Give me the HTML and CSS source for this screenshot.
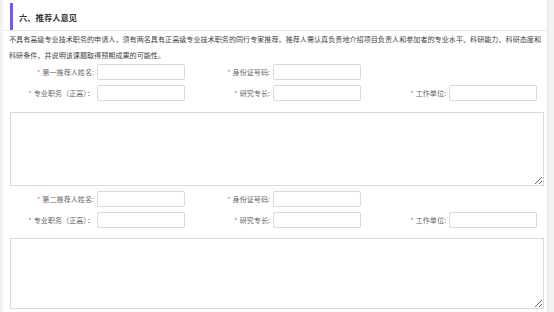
FILE: index.html
```html
<!DOCTYPE html>
<html>
<head>
	<meta charset="utf-8">
	<link rel="stylesheet" href="styles.css">
</head>
<body>
	<div class="page">
		<div class="section-head">
			<div class="section-title">六、推荐人意见</div>
		</div>
		<p class="intro">
			不具有高级专业技术职务的申请人，须有两名具有正高级专业技术职务的同行专家推荐。推荐人需认真负责地介绍项目负责人和参加者的专业水平、科研能力、科研态度和科研条件，并说明该课题取得预期成果的可能性。
		</p>

		<!-- first referee -->
		<div class="referee">
			<div class="form-row">
				<div class="field"><label><span class="req">*</span>第一推荐人姓名:</label><input type="text"></div>
				<div class="field"><label><span class="req">*</span>身份证号码:</label><input type="text"></div>
			</div>
			<div class="form-row">
				<div class="field"><label><span class="req">*</span>专业职务（正高）：</label><input type="text"></div>
				<div class="field"><label><span class="req">*</span>研究专长:</label><input type="text"></div>
				<div class="field"><label><span class="req">*</span>工作单位:</label><input type="text"></div>
			</div>
			<textarea class="opinion first"></textarea>
		</div>

		<!-- second referee -->
		<div class="referee">
			<div class="form-row">
				<div class="field"><label><span class="req">*</span>第二推荐人姓名:</label><input type="text"></div>
				<div class="field"><label><span class="req">*</span>身份证号码:</label><input type="text"></div>
			</div>
			<div class="form-row">
				<div class="field"><label><span class="req">*</span>专业职务（正高）：</label><input type="text"></div>
				<div class="field"><label><span class="req">*</span>研究专长:</label><input type="text"></div>
				<div class="field"><label><span class="req">*</span>工作单位:</label><input type="text"></div>
			</div>
			<textarea class="opinion second"></textarea>
		</div>
	</div>
	<div class="rail"></div>
</body>
</html>
```

FILE: styles.css
```css
html, body {
	margin: 0;
	padding: 0;
	width: 100%;
	height: 100%;
	overflow: hidden;
}
body {
	display: flex;
	background-color: #f2f2f2;
	font-family: "Noto Sans CJK SC", "Noto Sans", sans-serif;
	color: #555;
}
.page {
	width: 544px;
	margin-left: 3px;
	background: #fff;
	box-sizing: border-box;
}
.rail {
	flex: 1;
	background: #f3f3f3;
	border-left: 1px solid #e4e4e4;
}
.section-head {
	height: 31px;
	border-bottom: 1px solid #e8e8e8;
	padding: 3px 0 0 7px;
	box-sizing: border-box;
}
.section-title {
	height: 27px;
	border-left: 3px solid #7658f2;
	padding-left: 6px;
	display: flex;
	align-items: center;
	font-size: 8.3px;
	font-weight: bold;
	color: #333;
}
.intro {
	margin: 0;
	padding: 0 0 0 6px;
	font-size: 7.1px;
	line-height: 16px;
	color: #444;
}
.referee {
	display: flow-root;
	padding-top: 1px;
}
.referee + .referee {
	padding-top: 5px;
}
.form-row {
	display: grid;
	grid-template-columns: repeat(3, 176px);
	padding-left: 8px;
	margin-bottom: 5px;
}
.field {
	display: flex;
	align-items: center;
}
.field label {
	width: 86px;
	padding-right: 3px;
	box-sizing: border-box;
	text-align: right;
	font-size: 7.1px;
	color: #666;
	white-space: nowrap;
}
.req {
	color: #f26d6d;
	margin-right: 2px;
}
.field input {
	width: 88px;
	height: 16px;
	margin: 0;
	padding: 0 4px;
	border: 1px solid #d9d9d9;
	border-radius: 2px;
	box-sizing: border-box;
	font-size: 7px;
}
.opinion {
	display: block;
	width: 534px;
	margin: 11px 0 0 7px;
	padding: 2px;
	border: 1px solid #dadada;
	box-sizing: border-box;
	font-size: 7px;
}
.opinion.first {
	height: 74px;
}
.opinion.second {
	margin-top: 10px;
	height: 71px;
}
```
